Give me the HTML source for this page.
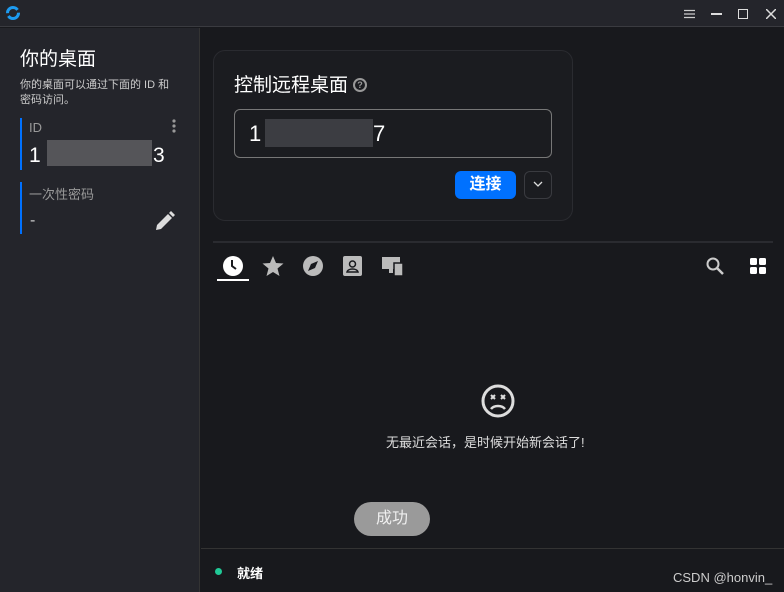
<!DOCTYPE html>
<html><head><meta charset="utf-8"><style>
*{margin:0;padding:0;box-sizing:border-box}
body{width:784px;height:592px;overflow:hidden;background:#18191d;font-family:"Liberation Sans","Noto Sans CJK SC",sans-serif;color:#fff;position:relative}
.a{position:absolute}
</style></head><body>
<div class="a" style="left:0;top:0;width:784px;height:27px;background:#24252b;border-bottom:1px solid #3a3b40"></div>
<svg class="a" style="left:5px;top:5px" width="16" height="16" viewBox="0 0 16 16"><circle cx="8" cy="8" r="5.5" fill="none" stroke="#1d9bf0" stroke-width="3" stroke-dasharray="14 3"/></svg>
<svg class="a" style="left:684px;top:9px" width="11" height="10"><path d="M0 1.5h11M0 5h11M0 8.5h11" stroke="#ccc" stroke-width="1.2"/></svg>
<div class="a" style="left:711px;top:13px;width:11px;height:1.5px;background:#ddd"></div>
<div class="a" style="left:738px;top:9px;width:10px;height:10px;border:1.5px solid #ddd"></div>
<svg class="a" style="left:766px;top:9px" width="10" height="10"><path d="M0 0L10 10M10 0L0 10" stroke="#ddd" stroke-width="1.5"/></svg>
<div class="a" style="left:0;top:28px;width:200px;height:564px;background:#24252b;border-right:1px solid #333"></div>
<div class="a" style="left:20px;top:44px;font-size:19px">你的桌面</div>
<div class="a" style="left:20px;top:78px;font-size:11px;line-height:15px;color:#ccc;width:170px">你的桌面可以通过下面的 ID 和<br>密码访问。</div>
<div class="a" style="left:20px;top:118px;width:2px;height:52px;background:#0071ff"></div>
<div class="a" style="left:29px;top:120px;font-size:13px;color:#999">ID</div>
<svg class="a" style="left:171px;top:119px" width="6" height="14"><circle cx="3" cy="2" r="1.6" fill="#999"/><circle cx="3" cy="7" r="1.6" fill="#999"/><circle cx="3" cy="12" r="1.6" fill="#999"/></svg>
<div class="a" style="left:29px;top:144px;font-size:21px">1</div>
<div class="a" style="left:47px;top:140px;width:105px;height:26px;background:#555559"></div>
<div class="a" style="left:153px;top:144px;font-size:21px">3</div>
<div class="a" style="left:20px;top:182px;width:2px;height:52px;background:#0071ff"></div>
<div class="a" style="left:29px;top:184px;font-size:13px;color:#999">一次性密码</div>
<div class="a" style="left:30px;top:212px;font-size:16px;color:#ccc">-</div>
<svg class="a" style="left:155px;top:211px" width="20" height="20" viewBox="0 0 20 20"><path d="M1 19l1-5L13 3l4 4L6 18z" fill="#ddd"/><path d="M14 2l2-2 4 4-2 2z" fill="#ddd"/></svg>
<div class="a" style="left:213px;top:50px;width:360px;height:171px;border:1px solid #2a2b30;border-radius:12px;background:#1b1c20"></div>
<div class="a" style="left:234px;top:70px;font-size:19px">控制远程桌面</div>
<div class="a" style="left:353px;top:78px;width:14px;height:14px;border:2px solid #999;border-radius:50%;font-size:9px;color:#999;text-align:center;line-height:10px;font-weight:bold">?</div>
<div class="a" style="left:234px;top:109px;width:318px;height:49px;border:1px solid #777;border-radius:6px"></div>
<div class="a" style="left:249px;top:121px;font-size:22px">1</div>
<div class="a" style="left:265px;top:119px;width:108px;height:28px;background:#3c3d42"></div>
<div class="a" style="left:373px;top:121px;font-size:22px">7</div>
<div class="a" style="left:455px;top:171px;width:61px;height:28px;background:#0071ff;border-radius:6px;font-size:16px;font-weight:bold;text-align:center;line-height:28px">连接</div>
<div class="a" style="left:524px;top:171px;width:28px;height:28px;border:1px solid #3a3b40;border-radius:6px"></div>
<svg class="a" style="left:533px;top:181px" width="10" height="7"><path d="M1 1l4 4 4-4" stroke="#ddd" stroke-width="1.3" fill="none"/></svg>
<div class="a" style="left:213px;top:241px;width:560px;height:2px;background:#2a2b30"></div>
<svg class="a" style="left:222px;top:255px" width="22" height="22"><circle cx="11" cy="11" r="10" fill="#fff"/><path d="M10 5v6l4 3" stroke="#18191d" stroke-width="2" fill="none"/></svg>
<div class="a" style="left:217px;top:279px;width:32px;height:2px;background:#fff"></div>
<svg class="a" style="left:262px;top:255px" width="22" height="22" viewBox="0 0 22 22"><path d="M11 1l3 7 7.5.5-6 5 2 7.5L11 17l-6.5 4 2-7.5-6-5L8 8z" fill="#bbb"/></svg>
<svg class="a" style="left:302px;top:255px" width="22" height="22"><circle cx="11" cy="11" r="10" fill="#bbb"/><path d="M16 6l-7 3-3 7 7-3z" fill="#18191d"/></svg>
<div class="a" style="left:343px;top:256px;width:19px;height:20px;background:#bbb;border-radius:2px"></div>
<svg class="a" style="left:344px;top:257px" width="17" height="18"><circle cx="8.5" cy="7" r="3" fill="none" stroke="#18191d" stroke-width="1.5"/><path d="M3 15c1-4 10-4 11 0z" fill="none" stroke="#18191d" stroke-width="1.5"/></svg>
<svg class="a" style="left:382px;top:257px" width="22" height="20"><rect x="0" y="0" width="18" height="12" fill="#bbb"/><rect x="7" y="12" width="4" height="4" fill="#bbb"/><rect x="12" y="6" width="9" height="13" fill="#bbb" stroke="#18191d" stroke-width="1.5"/></svg>
<svg class="a" style="left:706px;top:257px" width="18" height="18"><circle cx="7" cy="7" r="5.5" fill="none" stroke="#ccc" stroke-width="2"/><path d="M11 11l6 6" stroke="#ccc" stroke-width="2.5"/></svg>
<svg class="a" style="left:750px;top:258px" width="16" height="16"><rect x="0" y="0" width="7" height="7" rx="1.5" fill="#fff"/><rect x="9" y="0" width="7" height="7" rx="1.5" fill="#fff"/><rect x="0" y="9" width="7" height="7" rx="1.5" fill="#fff"/><rect x="9" y="9" width="7" height="7" rx="1.5" fill="#fff"/></svg>
<svg class="a" style="left:481px;top:384px" width="34" height="34"><circle cx="17" cy="17" r="15" fill="none" stroke="#ddd" stroke-width="3"/><path d="M10 11l4 4M14 11l-4 4M20 11l4 4M24 11l-4 4" stroke="#ddd" stroke-width="2"/><path d="M10 25c3-4 11-4 14 0" stroke="#ddd" stroke-width="2.5" fill="none"/></svg>
<div class="a" style="left:386px;top:432px;font-size:13px;color:#ddd">无最近会话，是时候开始新会话了!</div>
<div class="a" style="left:354px;top:502px;width:76px;height:34px;background:#9a9a9a;border-radius:17px;font-size:16px;text-align:center;line-height:34px;color:#eee">成功</div>
<div class="a" style="left:201px;top:548px;width:583px;height:1px;background:#333"></div>
<div class="a" style="left:215px;top:568px;width:7px;height:7px;border-radius:50%;background:#20c997"></div>
<div class="a" style="left:237px;top:563px;font-size:13px;font-weight:bold">就绪</div>
<div class="a" style="left:673px;top:570px;font-size:13px;color:#ccc">CSDN @honvin_</div>
</body></html>
